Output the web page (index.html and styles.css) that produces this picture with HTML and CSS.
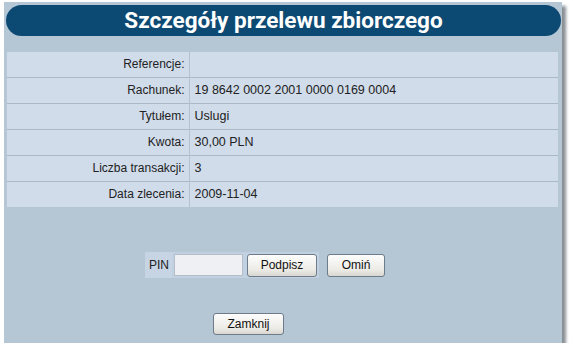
FILE: index.html
```html
<!DOCTYPE html>
<html lang="pl">
<head>
    <meta charset="UTF-8">
    <title>Szczegóły przelewu zbiorczego</title>
    <link rel="stylesheet" href="styles.css">
</head>
<body>
    <div class="window">
        <h1 class="title">Szczegóły przelewu zbiorczego</h1>

        <table class="details">
            <tr><th>Referencje:</th><td></td></tr>
            <tr><th>Rachunek:</th><td>19 8642 0002 2001 0000 0169 0004</td></tr>
            <tr><th>Tytułem:</th><td>Uslugi</td></tr>
            <tr><th>Kwota:</th><td>30,00 PLN</td></tr>
            <tr><th>Liczba transakcji:</th><td>3</td></tr>
            <tr><th>Data zlecenia:</th><td>2009-11-04</td></tr>
        </table>

        <div class="sign-row">
            <label class="pin-label" for="pin">PIN</label>
            <div class="pin-box">
                <input id="pin" type="password" class="pin-input">
                <button class="btn btn-sign">Podpisz</button>
            </div>
            <button class="btn btn-skip">Omiń</button>
        </div>

        <div class="close-row">
            <button class="btn btn-close">Zamknij</button>
        </div>
    </div>
</body>
</html>
```

FILE: styles.css
```css
* {
    margin: 0;
    padding: 0;
    box-sizing: border-box;
}

body {
    background-color: #fff;
    font-family: "Liberation Sans", Arial, sans-serif;
}

.window {
    width: 558px;
    height: 341px;
    margin: 2px 0 0 4px;
    padding: 3px 1px 0 2px;
    background-color: #b5c7d5;
    box-shadow: 4px 4px 3px #8a8f94;
}

.title {
    height: 31px;
    line-height: 31px;
    border-radius: 16px;
    background-color: #0d4a73;
    color: #fff;
    text-align: center;
    font-family: Roboto, "Liberation Sans", sans-serif;
    font-weight: bold;
    font-size: 22.5px;
}

.details {
    width: 551px;
    margin: 16px 0 0 1px;
    border-collapse: collapse;
    background-color: #d0dcea;
    font-size: 12px;
    color: #222;
}

.details tr {
    height: 26px;
    border-top: 1px solid #a9b9c9;
}

.details tr:first-child {
    border-top: none;
    height: 25px;
}

.details th {
    width: 182px;
    padding-right: 4px;
    text-align: right;
    font-weight: normal;
    border-right: 1px solid #b3c1d0;
}

.details td {
    padding-left: 5px;
    font-size: 12.5px;
}

.sign-row {
    display: flex;
    align-items: center;
    margin: 45px 0 0 139px;
}

.pin-label {
    height: 26px;
    line-height: 26px;
    padding: 0 3px 0 4px;
    background-color: #c6d4e4;
    font-size: 12px;
    color: #222;
}

.pin-box {
    display: flex;
    align-items: center;
    gap: 4px;
    height: 26px;
    padding: 0 2px;
    background-color: #c2d1e1;
}

.pin-input {
    width: 69px;
    height: 22px;
    border: 1px solid #b4bfca;
    background-color: #eef0f3;
}

.btn {
    height: 23px;
    border: 1px solid #6d7b8a;
    border-radius: 3px;
    background: linear-gradient(#fdfdfd, #ecebe6 70%, #d8d6cf);
    font-family: "Liberation Sans", Tahoma, sans-serif;
    font-weight: normal;
    font-size: 12px;
    color: #111;
}

.btn-sign {
    width: 70px;
}

.btn-skip {
    width: 58px;
    margin-left: 8px;
}

.close-row {
    margin: 35px 0 0 207px;
}

.btn-close {
    width: 71px;
    height: 22px;
}
```
